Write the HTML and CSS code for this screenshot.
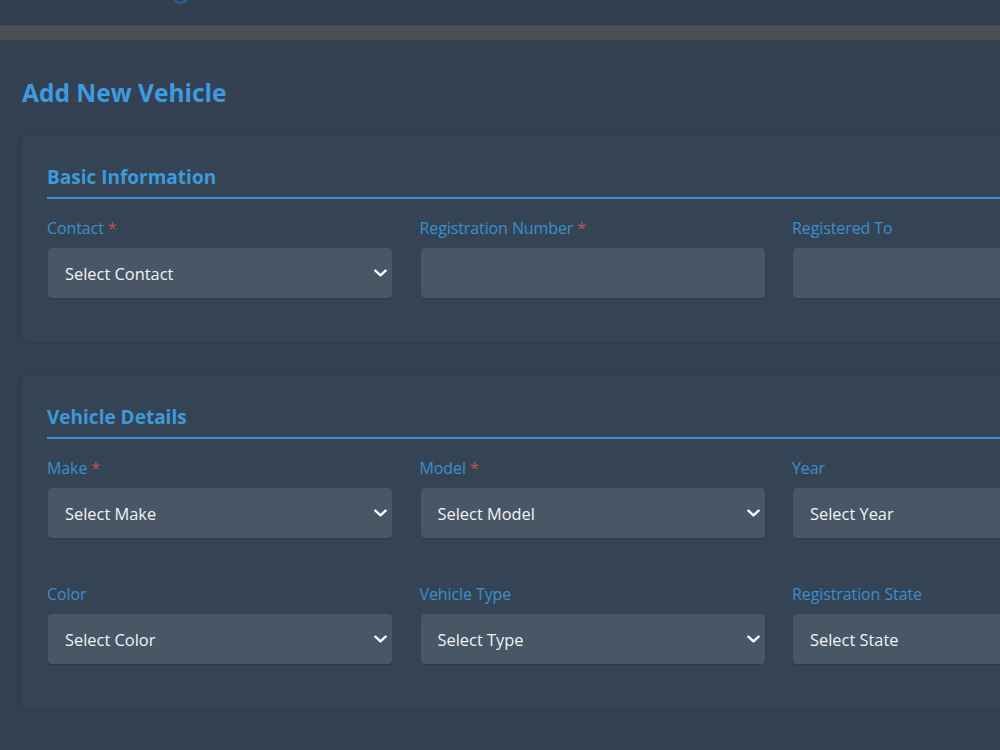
FILE: index.html
```html
<!DOCTYPE html>
<html lang="en">
<head>
<meta charset="utf-8">
<title>Add New Vehicle</title>
<link rel="stylesheet" href="styles.css">
</head>
<body>
<header class="topbar">
  <div class="brand">Vehicle Management</div>
</header>
<div class="strip"></div>
<main class="page">
  <h1 class="page-title">Add New Vehicle</h1>

  <section class="card">
    <h2 class="card-title">Basic Information</h2>
    <div class="grid">
      <div class="field">
        <label class="label">Contact <span class="req">*</span></label>
        <div class="select"><span>Select Contact</span><svg class="chev" viewBox="0 0 14 8"><path d="M1.5 1.5 L7 6.5 L12.5 1.5"/></svg></div>
      </div>
      <div class="field">
        <label class="label">Registration Number <span class="req">*</span></label>
        <div class="input"></div>
      </div>
      <div class="field">
        <label class="label">Registered To</label>
        <div class="input"></div>
      </div>
    </div>
  </section>

  <section class="card">
    <h2 class="card-title">Vehicle Details</h2>
    <div class="grid">
      <div class="field">
        <label class="label">Make <span class="req">*</span></label>
        <div class="select"><span>Select Make</span><svg class="chev" viewBox="0 0 14 8"><path d="M1.5 1.5 L7 6.5 L12.5 1.5"/></svg></div>
      </div>
      <div class="field">
        <label class="label">Model <span class="req">*</span></label>
        <div class="select"><span>Select Model</span><svg class="chev" viewBox="0 0 14 8"><path d="M1.5 1.5 L7 6.5 L12.5 1.5"/></svg></div>
      </div>
      <div class="field">
        <label class="label">Year</label>
        <div class="select"><span>Select Year</span><svg class="chev" viewBox="0 0 14 8"><path d="M1.5 1.5 L7 6.5 L12.5 1.5"/></svg></div>
      </div>
      <div class="field">
        <label class="label">Color</label>
        <div class="select"><span>Select Color</span><svg class="chev" viewBox="0 0 14 8"><path d="M1.5 1.5 L7 6.5 L12.5 1.5"/></svg></div>
      </div>
      <div class="field">
        <label class="label">Vehicle Type</label>
        <div class="select"><span>Select Type</span><svg class="chev" viewBox="0 0 14 8"><path d="M1.5 1.5 L7 6.5 L12.5 1.5"/></svg></div>
      </div>
      <div class="field">
        <label class="label">Registration State</label>
        <div class="select"><span>Select State</span><svg class="chev" viewBox="0 0 14 8"><path d="M1.5 1.5 L7 6.5 L12.5 1.5"/></svg></div>
      </div>
    </div>
  </section>
</main>
</body>
</html>
```
FILE: styles.css
```css
html, body {
  margin: 0;
  padding: 0;
}
body {
  background: #334152;
  font-family: "Open Sans", "Noto Sans", sans-serif;
  overflow: hidden;
  width: 1000px;
  height: 750px;
}
.topbar {
  height: 25px;
  background: #303e4f;
  display: flex;
  align-items: flex-end;
  overflow: hidden;
}
.brand {
  font-size: 26px;
  font-weight: 700;
  line-height: 30px;
  color: #2d5a85;
  margin: 0 0 22px 0;
  white-space: nowrap;
}
.strip {
  height: 15px;
  background: #4d4f52;
  border-top: 1px solid #45484c;
  box-sizing: border-box;
}
.page {
  padding: 37px 0 0 22px;
  width: 1250px;
}
.page-title {
  margin: 0;
  font-size: 24.5px;
  line-height: 32px;
  font-weight: 700;
  color: #3d9be0;
}
.card {
  margin-top: 26px;
  background: #354455;
  box-shadow: 0 0 6px rgba(30, 40, 52, 0.25);
  padding: 28px 25px 44px 25px;
  border-radius: 4px;
}
.card + .card {
  margin-top: 33px;
}
.card-title {
  margin: 0 0 18px 0;
  font-size: 19px;
  line-height: 28px;
  font-weight: 700;
  color: #3d99db;
  padding-bottom: 6px;
  border-bottom: 2px solid #3f8dcc;
}
.grid {
  display: grid;
  grid-template-columns: repeat(3, 345px);
  column-gap: 27.5px;
  row-gap: 45px;
}
.field {
  display: flex;
  flex-direction: column;
  gap: 9px;
}
.label {
  font-size: 16px;
  line-height: 22px;
  color: #3b8fcb;
  letter-spacing: -0.1px;
}
.req {
  color: #c2514f;
}
.select, .input {
  height: 50px;
  box-sizing: border-box;
  background: #485666;
  border-radius: 4px;
  margin-left: 1px;
  box-shadow: 0 1px 1px rgba(25, 34, 45, 0.35);
}
.select {
  display: flex;
  align-items: center;
  justify-content: space-between;
  padding: 0 5px 0 17px;
  color: #f1f3f5;
  font-size: 16.4px;
}
.chev {
  width: 13px;
  height: 8px;
  fill: none;
  stroke: #ffffff;
  stroke-width: 2.6;
  stroke-linecap: round;
  stroke-linejoin: round;
}
```
